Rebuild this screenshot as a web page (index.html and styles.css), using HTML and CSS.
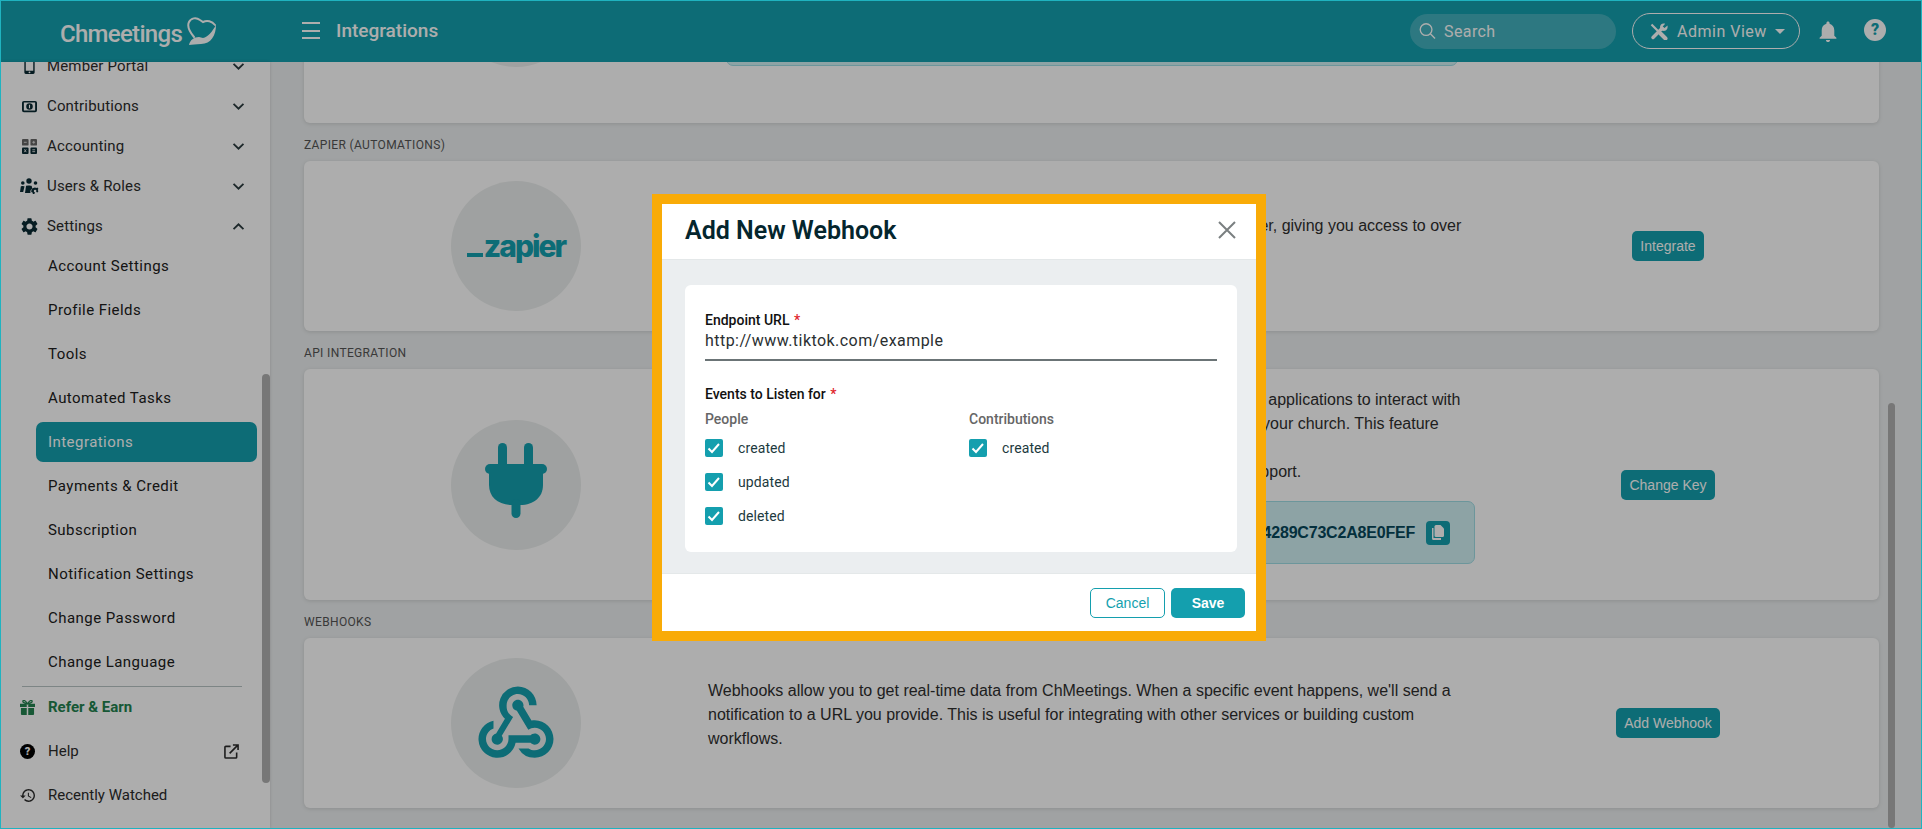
FILE: index.html
```html
<!DOCTYPE html>
<html lang="en">
<head>
    <meta charset="UTF-8">
    <title>Integrations</title>
    <link rel="stylesheet" href="styles.css">
</head>
<body>
<div class="frame">
    <header class="topbar">
        <div class="logo">
            <span class="logo-text">Chmeetings</span>
            <svg class="logo-mark" viewBox="0 0 30 29" fill="currentColor">
                <path d="M7 20C2 14 0 9 2 5 4 1 9 0 13 3l3 2c4-2 9-1 12 3" fill="none" stroke="currentColor" stroke-width="2" stroke-linecap="round"/>
                <path d="M2 28c1-5 5-8 10-8l4 1c5-1 9-6 13-13 0 10-5 19-15 19-5 0-9 1-12 1z"/>
            </svg>
        </div>
        <button class="menu-btn" type="button" aria-label="Menu"><span></span><span></span><span></span></button>
        <h1 class="page-title">Integrations</h1>
        <div class="topbar-right">
            <div class="search">
                <svg viewBox="0 0 18 18" fill="none" stroke="currentColor" stroke-width="1.4"><circle cx="7.5" cy="7.5" r="6.2"/><path d="M12 12l5 5"/></svg>
                <span>Search</span>
            </div>
            <div class="view-switch">
                <svg viewBox="0 0 18 17" fill="currentColor"><path d="M1.500 1.500L9 9" fill="none" stroke="currentColor" stroke-width="2.200"/><path d="M10.500 10.500l5 5" fill="none" stroke="currentColor" stroke-width="4" stroke-linecap="round"/><path d="M3 14.500l9-9" fill="none" stroke="currentColor" stroke-width="3.500" stroke-linecap="round"/><path d="M17.500 2.500l-3 2.600-1.800-1.700L15.200.8C12.500-.4 10 1.500 10 4c0 2.500 2.800 4.500 5 3.800 2-.6 3-2.800 2.500-5.300z"/></svg>
                <span>Admin View</span>
                <i class="caret"></i>
            </div>
            <svg class="bell" viewBox="4 2 16 20" fill="currentColor"><path d="M12 22c1.100 0 2-.9 2-2h-4c0 1.100.9 2 2 2zm6-6v-5c0-3.070-1.630-5.640-4.500-6.320V4c0-.83-.67-1.500-1.500-1.500s-1.500.67-1.500 1.500v.68C7.640 5.360 6 7.920 6 11v5l-2 2v1h16v-1l-2-2z"/></svg>
            <span class="help">?</span>
        </div>
    </header>

    <div class="layout">
        <aside class="sidebar">
            <a class="nav-row" href="###">
                <svg class="nav-icon" viewBox="0 0 16 16" fill="currentColor"><path d="M4 0h8a1.500 1.500 0 0 1 1.500 1.500v13A1.500 1.500 0 0 1 12 16H4a1.500 1.500 0 0 1-1.500-1.500v-13A1.500 1.500 0 0 1 4 0zm0 2v10.500h8V2zm4 11.200a1 1 0 1 0 0 2 1 1 0 0 0 0-2z"/></svg>
                <span>Member Portal</span>
                <svg class="chev" viewBox="0 0 14 10" fill="none" stroke="currentColor" stroke-width="2"><path d="M1.500 2L7 7.500 12.500 2"/></svg>
            </a>
            <a class="nav-row" href="###">
                <svg class="nav-icon" viewBox="0 0 16 12" fill="currentColor"><path fill-rule="evenodd" d="M2 0h12a2 2 0 0 1 2 2v8a2 2 0 0 1-2 2H2a2 2 0 0 1-2-2V2a2 2 0 0 1 2-2zm0 1.800v8.400h12V1.800zM8 2.500a3.500 3.500 0 1 1 0 7 3.500 3.500 0 0 1 0-7zM7.400 4v3.800h1.200V4z"/></svg>
                <span>Contributions</span>
                <svg class="chev" viewBox="0 0 14 10" fill="none" stroke="currentColor" stroke-width="2"><path d="M1.500 2L7 7.500 12.500 2"/></svg>
            </a>
            <a class="nav-row" href="###">
                <svg class="nav-icon" viewBox="0 0 16 16"><rect width="7" height="7" rx="1" fill="#666"/><rect x="9" width="7" height="7" rx="1" fill="#666"/><rect y="9" width="7" height="7" rx="1" fill="currentColor"/><rect x="9" y="9" width="7" height="7" rx="1" fill="currentColor"/><path d="M2 3.500h3M11 3.500h3M12.500 2v3M11 11.500h3M11 13.500h3M2.500 11l2 3M4.500 11l-2 3" stroke="#ddd" stroke-width="1"/></svg>
                <span>Accounting</span>
                <svg class="chev" viewBox="0 0 14 10" fill="none" stroke="currentColor" stroke-width="2"><path d="M1.500 2L7 7.500 12.500 2"/></svg>
            </a>
            <a class="nav-row" href="###">
                <svg class="nav-icon nav-icon-wide" viewBox="0 0 19 17" fill="currentColor"><circle cx="2.800" cy="5" r="1.800"/><circle cx="9" cy="3" r="2.700"/><circle cx="15.500" cy="5" r="1.800"/><path d="M0 14l.8-5.500C1 7.800 4 7.800 4.500 8.500L3.200 14zM5 15l1-7c.3-.8 5.200-.8 5.700 0l.6 2.500c-1.500.7-2.300 2.500-1.800 4.500z"/><path fill-rule="evenodd" d="M15 9.500l1.300.5 1.200-.5.9 1.200-.6 1.300.6 1.300-.9 1.200-1.200-.5-1.300.5-.7 1.500h-1.400l-.4-1.500-1.300-.6.3-2.500 1-1.200zm.1 2.300a1.300 1.300 0 1 0 0 2.600 1.300 1.300 0 0 0 0-2.600z"/></svg>
                <span>Users &amp; Roles</span>
                <svg class="chev" viewBox="0 0 14 10" fill="none" stroke="currentColor" stroke-width="2"><path d="M1.500 2L7 7.500 12.500 2"/></svg>
            </a>
            <a class="nav-row" href="###">
                <svg class="nav-icon nav-icon-gear" viewBox="2.500 2 19 20" fill="currentColor"><path d="M19.140 12.940c.04-.3.06-.61.06-.94 0-.32-.02-.64-.07-.94l2.030-1.580a.49.49 0 0 0 .12-.61l-1.920-3.320a.488.488 0 0 0-.59-.22l-2.390.96c-.5-.38-1.030-.7-1.620-.94l-.36-2.540a.484.484 0 0 0-.48-.41h-3.840c-.24 0-.43.17-.47.41l-.36 2.540c-.59.24-1.130.57-1.620.94l-2.390-.96c-.22-.08-.47 0-.59.22L2.740 8.870c-.12.21-.08.47.12.61l2.030 1.580c-.05.3-.09.63-.09.94s.02.64.07.94l-2.030 1.580a.49.49 0 0 0-.12.61l1.920 3.320c.12.22.37.29.59.22l2.390-.96c.5.38 1.030.7 1.620.94l.36 2.540c.05.24.24.41.48.41h3.840c.24 0 .44-.17.47-.41l.36-2.540c.59-.24 1.130-.56 1.620-.94l2.390.96c.22.08.47 0 .59-.22l1.920-3.320c.12-.22.07-.47-.12-.61l-2.010-1.580zM12 15.600c-1.980 0-3.600-1.620-3.600-3.600s1.620-3.600 3.600-3.600 3.600 1.620 3.600 3.600-1.620 3.600-3.600 3.600z"/></svg>
                <span>Settings</span>
                <svg class="chev" viewBox="0 0 14 10" fill="none" stroke="currentColor" stroke-width="2"><path d="M1.500 8L7 2.500 12.500 8"/></svg>
            </a>
            <ul class="subnav">
                <li><a href="###">Account Settings</a></li>
                <li><a href="###">Profile Fields</a></li>
                <li><a href="###">Tools</a></li>
                <li><a href="###">Automated Tasks</a></li>
                <li><a href="###" class="active">Integrations</a></li>
                <li><a href="###">Payments &amp; Credit</a></li>
                <li><a href="###">Subscription</a></li>
                <li><a href="###">Notification Settings</a></li>
                <li><a href="###">Change Password</a></li>
                <li><a href="###">Change Language</a></li>
            </ul>
            <div class="side-divider"></div>
            <div class="side-footer">
                <a class="foot-row refer" href="###">
                    <svg class="foot-icon" viewBox="0 0 16 16" fill="currentColor"><path d="M0 4h7.200v3.500H0zM8.800 4H16v3.500H8.800zM1 8.500h6.200V16H2a1 1 0 0 1-1-1zM8.800 8.500H15V15a1 1 0 0 1-1 1H8.800z"/><path d="M8 4C6 1 4.500 0 3.500.6 2.400 1.300 3 3.400 8 4c5-.6 5.600-2.700 4.500-3.400C11.500 0 10 1 8 4z" fill="none" stroke="currentColor" stroke-width="1.400"/></svg>
                    <span>Refer &amp; Earn</span>
                </a>
                <a class="foot-row" href="###">
                    <span class="foot-help">?</span>
                    <span>Help</span>
                    <svg class="ext" viewBox="0 0 16 16" fill="none" stroke="currentColor" stroke-width="1.700"><path d="M7 2.500H2a1 1 0 0 0-1 1V14a1 1 0 0 0 1 1h10.500a1 1 0 0 0 1-1V9"/><path d="M6 10L15 1M9.500 1H15v5.500"/></svg>
                </a>
                <a class="foot-row" href="###">
                    <svg class="foot-icon" viewBox="1 3 21 18" fill="currentColor"><path d="M13 3c-4.970 0-9 4.030-9 9H1l3.890 3.890.07.14L9 12H6c0-3.870 3.130-7 7-7s7 3.130 7 7-3.130 7-7 7c-1.930 0-3.680-.79-4.940-2.060l-1.420 1.420C8.270 19.990 10.510 21 13 21c4.970 0 9-4.030 9-9s-4.030-9-9-9zm-1 5v5l4.280 2.540.72-1.210-3.500-2.080V8H12z"/></svg>
                    <span>Recently Watched</span>
                </a>
            </div>
            <div class="scroll-thumb side-thumb"></div>
        </aside>

        <main class="content">
            <section class="card card-first">
                <div class="badge"></div>
                <div class="card-text">
                    <div class="key-box key-box-short"></div>
                </div>
                <div class="card-action"></div>
            </section>

            <h2 class="section-label">Zapier (Automations)</h2>
            <section class="card">
                <div class="badge"><span class="zapier-logo"><i></i>zapier</span></div>
                <div class="card-text">
                    <p class="note">Automate your tasks by connecting ChMeetings to all the tools you use together, giving you access to over 5,000 popular apps and services such as Mailchimp and Slack.</p>
                </div>
                <div class="card-action"><a class="btn" href="###">Integrate</a></div>
            </section>

            <h2 class="section-label">API Integration</h2>
            <section class="card card-tall">
                <div class="badge">
                    <svg class="plug" viewBox="0 0 62 75" fill="currentColor"><rect x="13" y="0" width="9" height="26" rx="4.500"/><rect x="39" y="0" width="9" height="26" rx="4.500"/><rect x="0" y="21" width="62" height="10" rx="5"/><path d="M4 26h54v16c0 12-9 20-23 20H27C13 62 4 54 4 42z"/><rect x="26.500" y="56" width="9" height="19" rx="4.500"/></svg>
                </div>
                <div class="card-text">
                    <p>The API lets your in-house developers build tools that allow other software and applications to interact with the data stored in ChMeetings and automate the daily workflows in all parts of your church. This feature requires some technical knowledge.</p>
                    <p>If you need an API key or have any questions, please contact our customer support.</p>
                    <div class="key-box">
                        <code>A3F7D91E0B6C44289C73C2A8E0FEF</code>
                        <a class="copy-btn" href="###" aria-label="Copy">
                            <svg viewBox="0 0 12 15" fill="currentColor"><path d="M0 3h1.500v10H9v2H1.500A1.500 1.500 0 0 1 0 13.500z"/><path d="M4 0h4.500L12 3.500V10.500A1.500 1.500 0 0 1 10.500 12H4a1.500 1.500 0 0 1-1.500-1.500v-9A1.500 1.500 0 0 1 4 0z"/></svg>
                        </a>
                    </div>
                </div>
                <div class="card-action"><a class="btn" href="###">Change Key</a></div>
            </section>

            <h2 class="section-label">Webhooks</h2>
            <section class="card">
                <div class="badge">
                    <svg class="hook" viewBox="0 0 24 24" fill="currentColor"><path d="M10 15h5.880c.27-.31.67-.5 1.120-.5.83 0 1.500.67 1.500 1.500s-.67 1.500-1.500 1.500c-.44 0-.84-.19-1.120-.5H11.900A5 5 0 1 1 6 11.100v2.070c-1.160.41-2 1.530-2 2.830 0 1.650 1.350 3 3 3s3-1.350 3-3v-1zm2.500-11c1.650 0 3 1.350 3 3h2c0-2.760-2.240-5-5-5a5.002 5.002 0 0 0-3.450 8.620l-2.350 3.900c-.68.14-1.200.75-1.200 1.480 0 .83.67 1.500 1.500 1.500a1.498 1.498 0 0 0 1.210-2.380l3.010-5C9.540 9.150 9.500 7.900 9.500 7c0-1.650 1.350-3 3-3zm4.500 9c-.64 0-1.230.2-1.720.54l-3.050-5.070C11.530 8.350 11 7.740 11 7c0-.83.67-1.500 1.500-1.500S14 6.170 14 7c0 .15-.02.29-.06.43l2.190 3.650c.28-.05.57-.08.87-.08 2.760 0 5 2.240 5 5s-2.240 5-5 5a5 5 0 0 1-4.330-2.500h2.670c.48.32 1.050.5 1.660.5 1.650 0 3-1.350 3-3s-1.350-3-3-3z"/></svg>
                </div>
                <div class="card-text">
                    <p class="note">Webhooks allow you to get real-time data from ChMeetings. When a specific event happens, we'll send a notification to a URL you provide. This is useful for integrating with other services or building custom workflows.</p>
                </div>
                <div class="card-action"><a class="btn" href="###">Add Webhook</a></div>
            </section>
            <div class="scroll-thumb main-thumb"></div>
        </main>
    </div>

    <div class="backdrop">
        <div class="modal">
            <div class="modal-head">
                <h3>Add New Webhook</h3>
                <svg class="modal-close" viewBox="0 0 18 18" fill="none" stroke="currentColor" stroke-width="2"><path d="M1 1l16 16M17 1L1 17"/></svg>
            </div>
            <div class="modal-body">
                <form class="panel">
                    <div class="field-label">Endpoint URL <em>*</em></div>
                    <div class="field-value">http://www.tiktok.com/example</div>
                    <div class="field-label events-label">Events to Listen for <em>*</em></div>
                    <div class="event-cols">
                        <div class="event-col">
                            <div class="event-head">People</div>
                            <label class="check"><i class="box"><svg viewBox="0 0 18 18" fill="none" stroke="#fff" stroke-width="2"><path d="M3.500 9.500l3.500 3.500 7-8"/></svg></i>created</label>
                            <label class="check"><i class="box"><svg viewBox="0 0 18 18" fill="none" stroke="#fff" stroke-width="2"><path d="M3.500 9.500l3.500 3.500 7-8"/></svg></i>updated</label>
                            <label class="check"><i class="box"><svg viewBox="0 0 18 18" fill="none" stroke="#fff" stroke-width="2"><path d="M3.500 9.500l3.500 3.500 7-8"/></svg></i>deleted</label>
                        </div>
                        <div class="event-col">
                            <div class="event-head">Contributions</div>
                            <label class="check"><i class="box"><svg viewBox="0 0 18 18" fill="none" stroke="#fff" stroke-width="2"><path d="M3.500 9.500l3.500 3.500 7-8"/></svg></i>created</label>
                        </div>
                    </div>
                </form>
            </div>
            <div class="modal-foot">
                <a class="btn btn-outline" href="###">Cancel</a>
                <a class="btn btn-save" href="###">Save</a>
            </div>
        </div>
    </div>
</div>
</body>
</html>
```

FILE: styles.css
```css
*{padding: 0;margin: 0;box-sizing: border-box;list-style: none;}
html,body{height: 100%;overflow: hidden;}
body{font-family: Roboto, "Liberation Sans", sans-serif;color: #2c2c2c;}
a{text-decoration: none;color: inherit;}

.frame{position: relative;height: 100vh;border: 1px solid #1fb3c0;display: flex;flex-direction: column;background: #eceff0;overflow: hidden;}

/* top bar */
.topbar{height: 61px;flex: none;background: #149fae;color: #fff;display: flex;align-items: center;}
.logo{width: 301px;padding-left: 59px;display: flex;align-items: center;gap: 5px;}
.logo-text{font-size: 24px;font-weight: 500;letter-spacing: -.7px;margin-top: 4px;}
.logo-mark{width: 30px;height: 29px;margin-top: -1px;}
.menu-btn{width: 18px;height: 17px;margin-top: -2px;background: none;border: 0;display: flex;flex-direction: column;justify-content: space-between;}
.menu-btn span{display: block;height: 2px;background: #fff;}
.page-title{font-size: 19px;font-weight: 500;margin-left: 16px;margin-top: -2px;}
.topbar-right{margin-left: auto;display: flex;align-items: center;padding-right: 35px;}
.search{width: 206px;height: 35px;border-radius: 18px;background: rgba(255,255,255,.2);display: flex;align-items: center;padding-left: 9px;gap: 8px;font-size: 16px;letter-spacing: .4px;margin-top: -1px;}
.search svg{width: 17px;height: 18px;}
.view-switch{width: 168px;height: 36px;margin-left: 16px;border: 1px solid #fff;border-radius: 18px;display: flex;align-items: center;padding-left: 17px;font-size: 16px;letter-spacing: .5px;margin-top: -1px;}
.view-switch svg{width: 18px;height: 17px;margin-right: 9px;}
.caret{width: 0;height: 0;border: 5px solid transparent;border-top-color: #fff;border-bottom: 0;margin-left: 8px;}
.bell{width: 18px;height: 21px;margin-left: 19px;}
.help{width: 22px;height: 22px;margin-left: 27px;margin-top: -3px;border-radius: 50%;background: #fff;color: #149fae;font-size: 16px;font-weight: 900;line-height: 22px;text-align: center;}

.layout{flex: 1;min-height: 0;display: flex;}

/* left side */
.sidebar{position: relative;width: 269px;flex: none;background: #fff;display: flex;flex-direction: column;justify-content: flex-end;padding-bottom: 13px;box-shadow: 0 0 3px rgba(0,0,0,.15);overflow: hidden;font-size: 15px;letter-spacing: .45px;}
.nav-row{flex: none;height: 40px;display: flex;align-items: center;padding-left: 21px;padding-right: 25px;letter-spacing: .15px;}
.nav-icon{width: 15px;height: 15px;margin-right: 10px;color: #0a2a33;flex: none;}
.nav-icon-wide{width: 19px;height: 17px;margin-left: -2px;margin-right: 8px;}
.nav-icon-gear{height: 17px;width: 17px;margin-left: -1px;margin-right: 9px;}
.chev{width: 13px;height: 9px;margin-left: auto;color: #2b3b3f;}
.subnav{flex: none;display: flex;flex-direction: column;gap: 4px;padding-left: 35px;padding-right: 13px;}
.subnav a{display: flex;align-items: center;height: 40px;padding-left: 12px;border-radius: 7px;color: #202020;}
.subnav .active{background: #149fae;color: #fff;}
.side-divider{flex: none;height: 1px;margin: 4px 28px 0 21px;background: #b9c4c4;}
.side-footer{flex: none;display: flex;flex-direction: column;gap: 4px;}
.foot-row{height: 40px;display: flex;align-items: center;padding-left: 19px;padding-right: 31px;letter-spacing: 0;}
.foot-icon{width: 15px;height: 15px;flex: none;margin-right: 13px;}
.foot-help{width: 15px;height: 15px;flex: none;margin-right: 13px;border-radius: 50%;background: #000;color: #fff;font-size: 11px;font-weight: 900;line-height: 15px;text-align: center;}
.refer{color: #23824f;font-weight: 700;}
.ext{width: 15px;height: 15px;margin-left: auto;}

.scroll-thumb{position: absolute;width: 8px;border-radius: 4px;background: #b0b0b0;}
.side-thumb{right: 0;top: 312px;bottom: 45px;}
.main-thumb{right: 26px;top: 341px;bottom: 0;width: 7px;}

/* cards */
.content{position: relative;flex: 1;min-width: 0;display: flex;flex-direction: column;justify-content: flex-end;padding: 0 42px 20px 34px;overflow: hidden;}
.card{flex: none;min-height: 170px;background: #fff;border-radius: 6px;box-shadow: 0 1px 4px rgba(0,0,0,.12);display: grid;grid-template-columns: 384px 1fr 382px;align-items: center;padding: 0 20px;}
.card-first{height: 242px;}
.card-tall{min-height: 231px;}
.section-label{flex: none;font-size: 12px;font-weight: 400;line-height: 16px;letter-spacing: .35px;text-transform: uppercase;color: #555;margin: 14px 0 8px;}
.badge{width: 130px;height: 130px;border-radius: 50%;background: #ebeeed;justify-self: center;display: flex;align-items: center;justify-content: center;color: #149fae;}
.plug{width: 62px;height: 75px;margin-top: -8px;}
.hook{width: 90px;height: 90px;margin-top: 2px;}
.zapier-logo{display: flex;align-items: baseline;font-family: Inter, Roboto, sans-serif;font-weight: 800;font-size: 30px;letter-spacing: -2px;line-height: 1;}
.zapier-logo i{display: block;width: 16px;height: 4px;margin-right: 1px;background: currentColor;}
.card-text{font-family: "Liberation Sans", Arial, sans-serif;font-size: 16px;line-height: 24px;color: #2f2f2f;padding-right: 12px;}
.note{margin-bottom: 16px;}
.card-action{display: flex;justify-content: center;}
.btn{display: inline-flex;align-items: center;height: 30px;padding: 0 8.5px;border-radius: 5px;background: #149fae;color: #fff;font-family: "Liberation Sans", Arial, sans-serif;font-size: 14px;}
.key-box{display: flex;align-items: center;justify-content: flex-end;height: 63px;margin: 17px -10px 17px 0;padding-right: 24px;background: #d0f0f4;border: 1px solid #a0dde5;border-radius: 7px;overflow: hidden;}
.key-box code{font-family: "Liberation Sans", Arial, sans-serif;font-weight: 700;font-size: 16px;letter-spacing: -.2px;color: #06475a;white-space: nowrap;}
.key-box-short{height: 60px;margin: 0 7px 57px 18px;}
.copy-btn{display: flex;align-items: center;justify-content: center;width: 24px;height: 24px;margin-left: 11px;border-radius: 4px;background: #149fae;color: #fff;}
.copy-btn svg{width: 12px;height: 15px;}
.card-first .card-text{align-self: end;}

/* dialog */
.backdrop{position: absolute;inset: 0;z-index: 10;background: rgba(0,0,0,.32);}
.modal{position: absolute;left: 651px;top: 193px;width: 614px;border: 10px solid #f9ab07;background: #fff;display: flex;flex-direction: column;}
.modal-head{height: 56px;display: flex;align-items: center;justify-content: space-between;padding: 0 20px 0 23px;border-bottom: 1px solid #e4e8e9;}
.modal-head h3{font-size: 25px;font-weight: 600;color: #04262e;margin-top: -2px;}
.modal-close{width: 18px;height: 18px;color: #7a7f80;margin-top: -3px;}
.modal-body{background: #ebeef0;height: 313px;padding: 25px 19px 21px 23px;}
.panel{background: #fff;border-radius: 6px;padding: 27px 20px 0 20px;height: 100%;}
.field-label{font-size: 14px;font-weight: 500;line-height: 16px;color: #111;}
.field-label em{font-style: normal;color: #e0242c;margin-left: 1px;}
.field-value{height: 33px;border-bottom: 2px solid #6b7476;font-size: 16px;letter-spacing: .45px;line-height: 18px;padding-top: 4px;color: #2a2f31;}
.events-label{margin-top: 25px;}
.event-cols{display: flex;margin-top: 9px;}
.event-col{width: 264px;flex: none;}
.event-head{font-size: 14px;font-weight: 500;line-height: 16px;color: #666;margin-bottom: 12px;}
.check{display: flex;align-items: center;height: 18px;margin-bottom: 16px;font-size: 14px;letter-spacing: .1px;color: #1d3a40;}
.box{width: 18px;height: 18px;margin-right: 15px;border-radius: 2px;background: #149fae;}
.box svg{display: block;width: 18px;height: 18px;}
.modal-foot{height: 58px;display: flex;align-items: center;justify-content: flex-end;gap: 6px;padding: 0 11px 0 0;border-top: 1px solid #e4e8e9;}
.btn-outline{width: 75px;justify-content: center;background: #fff;border: 1px solid #149fae;color: #149fae;padding: 0;}
.btn-save{width: 74px;justify-content: center;padding: 0;font-weight: 700;}
```
